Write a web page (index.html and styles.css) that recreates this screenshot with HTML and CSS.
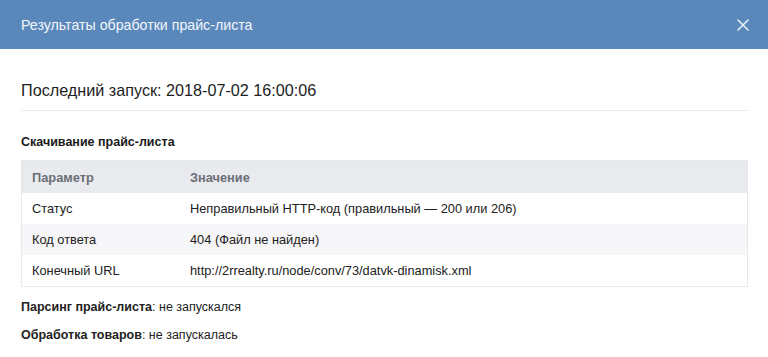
FILE: index.html
```html
<!DOCTYPE html>
<html lang="ru">
<head>
  <meta charset="UTF-8">
  <title>Результаты обработки прайс-листа</title>
  <link rel="stylesheet" href="styles.css">
</head>
<body>
<div class="modal">
  <div class="modal-head">
    <span class="modal-title">Результаты обработки прайс-листа</span>
    <span class="close">
      <svg width="12" height="12" viewBox="0 0 12 12"><path d="M1 1L11 11M11 1L1 11" stroke="#e8f0f8" stroke-width="1.6" stroke-linecap="round"/></svg>
    </span>
  </div>
  <div class="modal-body">
    <h2 class="last-run">Последний запуск: 2018-07-02 16:00:06</h2>
    <h3 class="section">Скачивание прайс-листа</h3>
    <table class="params">
      <thead>
        <tr><th class="col-name">Параметр</th><th>Значение</th></tr>
      </thead>
      <tbody>
        <tr><td>Статус</td><td>Неправильный HTTP-код (правильный — 200 или 206)</td></tr>
        <tr><td>Код ответа</td><td>404 (Файл не найден)</td></tr>
        <tr><td>Конечный URL</td><td>http://2rrealty.ru/node/conv/73/datvk-dinamisk.xml</td></tr>
      </tbody>
    </table>
    <p class="stage"><b>Парсинг прайс-листа</b>: не запускался</p>
    <p class="stage"><b>Обработка товаров</b>: не запускалась</p>
  </div>
</div>
</body>
</html>
```

FILE: styles.css
```css
body {
  margin: 0;
  background: #fff;
  font-family: "Liberation Sans", Arial, sans-serif;
  color: #222;
}

.modal {
  width: 768px;
  height: 357px;
  overflow: hidden;
}

.modal-head {
  height: 49px;
  background: #5b88bb;
  display: flex;
  align-items: center;
  justify-content: space-between;
  padding: 0 19px 0 21px;
}

.modal-title {
  color: #f2f6fa;
  font-size: 14.2px;
}

.close {
  display: flex;
}

.modal-body {
  padding: 0 20px 0 21px;
}

.last-run {
  font-size: 16.2px;
  font-weight: normal;
  margin: 0;
  padding: 32px 0 10px;
  border-bottom: 1px solid #ececef;
  color: #1e1e1e;
}

.section {
  font-size: 12.5px;
  font-weight: bold;
  margin: 24px 0 11px;
  color: #1a1a1a;
}

.params {
  width: 100%;
  border-collapse: collapse;
  border: 1px solid #e7e8ec;
  font-size: 12.8px;
}

.params th, .params td {
  text-align: left;
  padding: 0 10px;
  height: 31px;
}

.params th {
  background: #e9eaee;
  color: #6b6f78;
  font-weight: bold;
  height: 32px;
}

.params .col-name {
  width: 138px;
}

.params td {
  color: #222;
}

.params tbody tr:nth-child(even) {
  background: #f6f6f8;
}

.stage {
  font-size: 12.5px;
  margin: 13px 0 0;
  color: #222;
}

.stage + .stage {
  margin-top: 14px;
}
```
